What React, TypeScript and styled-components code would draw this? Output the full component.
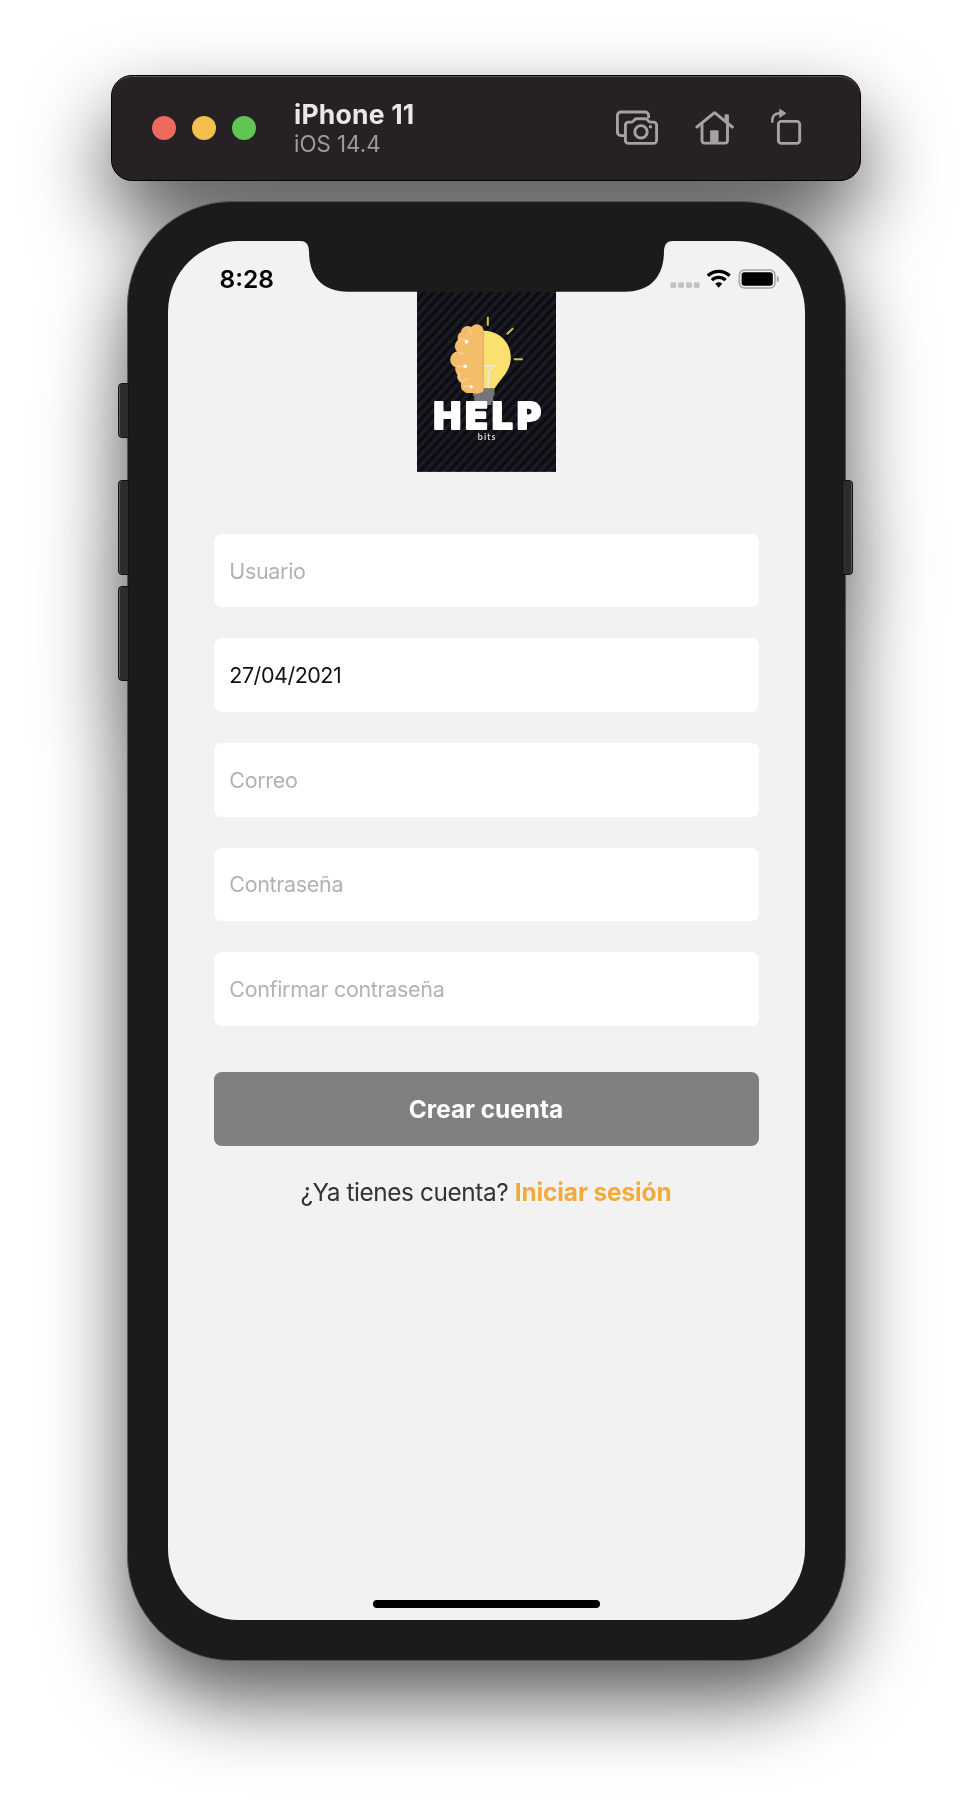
import React from "react";
import styled, { createGlobalStyle } from "styled-components";

const GlobalStyle = createGlobalStyle`
  * { box-sizing: border-box; }
  body {
    margin: 0;
    background: #fff;
    font-family: Inter, "Liberation Sans", sans-serif;
  }
`;

const Desktop = styled.main`
  width: 972px;
  height: 1810px;
  padding-top: 75px;
  overflow: hidden;
`;

const Simulator = styled.div`
  display: flex;
  flex-direction: column;
  align-items: center;
  gap: 20px;
  filter: drop-shadow(0 38px 40px rgba(0, 0, 0, 0.66));
`;

const TitleBar = styled.header`
  display: flex;
  align-items: center;
  width: 750px;
  height: 106px;
  padding: 0 58px 0 40px;
  border: 1px solid #000;
  border-radius: 21px;
  background: #252124;
  box-shadow: inset 0 1px 0 #5a5759;
`;

const Lights = styled.div`
  display: flex;
  gap: 16px;
`;

const Light = styled.span<{ $color: string }>`
  width: 24px;
  height: 24px;
  border-radius: 50%;
  background: ${(p) => p.$color};
`;

const Heading = styled.div`
  flex: 1;
  margin-left: 38px;
  padding-top: 3px;
`;

const DeviceName = styled.div`
  color: #e9e8e9;
  font-size: 26.5px;
  line-height: 29px;
  font-weight: 700;
  letter-spacing: 0.22px;
`;

const OsVersion = styled.div`
  color: #a19b9f;
  font-size: 22.3px;
  line-height: 30px;
`;

const Tools = styled.div`
  display: flex;
  align-items: center;
  gap: 36px;
  color: #a7a1a5;
`;

const Phone = styled.div`
  position: relative;
  width: 719px;
  height: 1460px;
  padding: 39px 40px 40px;
  border: 1px solid #555;
  border-radius: 105px;
  background: #1b1b1b;
`;

const SideButton = styled.span<{ $side: "left" | "right"; $top: number; $height: number }>`
  position: absolute;
  ${(p) => (p.$side === "left" ? "left: -10px" : "right: -8px")};
  top: ${(p) => p.$top}px;
  width: 11px;
  height: ${(p) => p.$height}px;
  border: 1px solid #111;
  border-radius: ${(p) => (p.$side === "left" ? "4px 0 0 4px" : "0 4px 4px 0")};
  background: #2c2c2c;
  box-shadow: inset ${(p) => (p.$side === "left" ? "1px" : "-1px")} 0 0 #5c5c5c;
`;

const Screen = styled.div`
  position: relative;
  display: flex;
  flex-direction: column;
  align-items: center;
  width: 637px;
  height: 1379px;
  border-radius: 71px;
  background: #f2f2f2;
  overflow: hidden;
`;

const Notch = styled.svg`
  position: absolute;
  top: 0;
  left: 132px;
`;

const StatusBar = styled.div`
  display: flex;
  flex: none;
  justify-content: space-between;
  align-self: stretch;
  height: 46px;
  padding: 25px 25px 0 52px;
`;

const Time = styled.span`
  font-size: 24.5px;
  line-height: 27px;
  font-weight: 600;
  color: #000;
`;

const Signals = styled.div`
  display: flex;
  align-items: center;
  height: 27px;
`;

const Logo = styled.svg`
  flex: none;
  display: block;
`;

const Form = styled.form`
  display: flex;
  flex-direction: column;
  gap: 30.8px;
  width: 545px;
  margin-top: 61.7px;
`;

const Field = styled.input`
  height: 73.85px;
  padding: 0 15.8px;
  border: 0;
  border-radius: 7.7px;
  background: #fff;
  color: #111;
  font: 400 21.5px Inter, "Liberation Sans", sans-serif;
  letter-spacing: -0.48px;
  &::placeholder {
    color: #b2b2b2;
    letter-spacing: -0.33px;
    opacity: 1;
  }
`;

const Submit = styled.button`
  height: 73.85px;
  margin-top: 15.4px;
  border: 0;
  border-radius: 7.7px;
  background: #808080;
  color: #fff;
  font: 700 24.4px Inter, "Liberation Sans", sans-serif;
  letter-spacing: 0;
`;

const Footer = styled.p`
  margin: 31px 0 0;
  color: #333;
  font-size: 24.4px;
  line-height: 30px;
  letter-spacing: -0.43px;
  white-space: nowrap;
`;

const Link = styled.a`
  color: #f2ab3a;
  font-weight: 700;
  letter-spacing: -0.08px;
`;

const HomeIndicator = styled.span`
  width: 227px;
  height: 8px;
  margin-top: auto;
  margin-bottom: 12px;
  border-radius: 4px;
  background: #000;
`;

const RotateGlyph = styled.svg`
  margin-bottom: 2px;
`;

const CameraIcon = () => (
  <svg width="42" height="36" viewBox="0 0 42 36" fill="none" stroke="currentColor" strokeWidth="2.9">
    <path d="M8 25.6H5a3.6 3.6 0 0 1-3.6-3.6V5.6A3.6 3.6 0 0 1 5 2h24a3.6 3.6 0 0 1 3.6 3.6V8" />
    <path d="M12.4 12.1h3.1c1 0 1.5-.4 2.1-1.2l.8-1.1c.5-.7 1.1-1 2-1h9.2c.9 0 1.5.3 2 1l.8 1.1c.6.8 1.1 1.2 2.1 1.2h3.1a3 3 0 0 1 3 3v15.3a3 3 0 0 1-3 3H12.4a3 3 0 0 1-3-3V15.1a3 3 0 0 1 3-3z" />
    <circle cx="25" cy="21.8" r="6.2" />
    <circle cx="34.4" cy="16.8" r="1.7" fill="currentColor" stroke="none" />
  </svg>
);

const HomeIcon = () => (
  <svg width="40" height="36" viewBox="0 0 40 36" fill="none" stroke="currentColor" strokeWidth="2.9" strokeLinecap="round" strokeLinejoin="round">
    <path d="M2.9 17 20.6 2.7 38.3 17" />
    <path d="M8 14v16.7a2.4 2.4 0 0 0 2.4 2.4h20.7a2.4 2.4 0 0 0 2.4-2.4V14" />
    <path d="M30.6 5.2a1 1 0 0 1 1-1h2.3a1 1 0 0 1 1 1V14l-4.3-3.5z" fill="currentColor" stroke="none" />
    <path d="M16.1 33V21.2a1 1 0 0 1 1-1h6.5a1 1 0 0 1 1 1V33z" fill="currentColor" stroke="none" />
  </svg>
);

const RotateIcon = () => (
  <RotateGlyph width="32" height="38" viewBox="0 0 32 38" fill="none" stroke="currentColor" strokeWidth="2.9">
    <rect x="8.4" y="13.4" width="21.3" height="22" rx="2.8" />
    <path d="M2.3 14.8V12.5C2.3 8 5 5.2 10 5.2" strokeWidth="2.5" />
    <path d="M9.6 1.2v8.2L16 5.2z" fill="currentColor" strokeWidth="0.8" strokeLinejoin="round" />
  </RotateGlyph>
);

const StatusIcons = () => (
  <svg width="110" height="21" viewBox="0 0 110 21">
    {[0, 7.8, 15.6, 23.4].map((x) => (
      <rect key={x} x={x + 0.4} y="13.2" width="5.8" height="5.8" rx="1.4" fill="#c3c3c3" />
    ))}
    <g fill="none" stroke="#000" strokeWidth="3.4">
      <path d="M37.8 6.8a15.6 15.6 0 0 1 21.8 0" />
      <path d="M41.9 11.1a9.8 9.8 0 0 1 13.6 0" />
    </g>
    <path d="M45.2 14.8a5.4 5.4 0 0 1 7 0L48.7 18.7z" fill="#000" />
    <rect x="69.4" y="1" width="35.6" height="18" rx="5" fill="none" stroke="#a3a3a3" strokeWidth="1.5" />
    <rect x="71.6" y="3.2" width="31.2" height="13.6" rx="2.8" fill="#000" />
    <path d="M106.8 7c3 1 3 5.2 0 6.2z" fill="#a3a3a3" />
  </svg>
);

const BrainBulbLogo = () => (
  <Logo width="139" height="184.9" viewBox="51.5 21 417 554.7">
    <defs>
      <pattern id="stripes" width="21" height="21" patternUnits="userSpaceOnUse" patternTransform="rotate(43)">
        <rect width="21" height="21" fill="#0d0d0e" />
        <rect width="10.5" height="21" fill="#1a1b28" />
      </pattern>
    </defs>
    <rect x="51.5" y="21" width="417" height="554.7" fill="url(#stripes)" />
    <g stroke="#d2c342" strokeWidth="6">
      <path d="M264 110v27M321 163l19-18M342 238h27" />
    </g>
    <path d="M219 325h65v22h-4v18h-5v10h-47v-10h-5v-18h-4z" fill="#767676" />
    <path d="M240 152h15C300 154 333 188 333 232C333 274 305 292 285 325h-45z" fill="#fae06f" />
    <path d="M250 258h34l-18 15v52" fill="none" stroke="#e9e8d8" strokeWidth="6" />
    <g fill="#f4bd69">
      <path d="M200 145h42q10 0 10 10v170q0 14-14 14h-40l-25-80z" />
      <circle cx="231" cy="153" r="20" />
      <circle cx="204" cy="159" r="21" />
      <circle cx="192" cy="173" r="19" />
      <circle cx="190" cy="199" r="25" />
      <circle cx="176" cy="239" r="25" />
      <circle cx="190" cy="267" r="24" />
      <circle cx="193" cy="290" r="21" />
      <circle cx="205" cy="317" r="22" />
      <circle cx="230" cy="321" r="20" />
    </g>
    <path d="M250 155v172" stroke="#d9b05e" strokeWidth="3" />
    <g fill="none" stroke="#f9dcb0" strokeWidth="3">
      <path d="M176 183q8-13 24 2M211 145q-4 16 9 18M174 216q14 10 22 0M170 259h26M180 276q-8 14 4 22M186 311q4-14 17-14M191 324q6-10 23-4" />
    </g>
    <g fill="#fff">
      <circle cx="200" cy="185" r="5.5" />
      <circle cx="196" cy="259" r="5.5" />
      <circle cx="214" cy="320" r="5" />
    </g>
    <text x="101" y="448" fill="#fff" stroke="#fff" strokeWidth="6" strokeLinejoin="round" fontFamily="Inter" fontWeight="900" fontSize="110" textLength="323" lengthAdjust="spacing">
      HELP
    </text>
    <text x="234" y="480" fill="#fff" fontFamily="Lato" fontWeight="400" fontSize="27" textLength="53" lengthAdjust="spacing">
      bits
    </text>
  </Logo>
);

const fields = [
  { placeholder: "Usuario" },
  { placeholder: "Fecha", value: "27/04/2021" },
  { placeholder: "Correo" },
  { placeholder: "Contraseña" },
  { placeholder: "Confirmar contraseña" },
];

export default function App() {
  return (
    <Desktop>
      <GlobalStyle />
      <Simulator>
        <TitleBar>
          <Lights>
            <Light $color="#ed6a5f" />
            <Light $color="#f5bf4f" />
            <Light $color="#61c554" />
          </Lights>
          <Heading>
            <DeviceName>iPhone 11</DeviceName>
            <OsVersion>iOS 14.4</OsVersion>
          </Heading>
          <Tools>
            <CameraIcon />
            <HomeIcon />
            <RotateIcon />
          </Tools>
        </TitleBar>
        <Phone>
          <SideButton $side="left" $top={181} $height={55} />
          <SideButton $side="left" $top={278} $height={95} />
          <SideButton $side="left" $top={384} $height={95} />
          <SideButton $side="right" $top={278} $height={95} />
          <Screen>
            <StatusBar>
              <Time>8:28</Time>
              <Signals>
                <StatusIcons />
              </Signals>
            </StatusBar>
            <BrainBulbLogo />
            <Form>
              {fields.map((f) => (
                <Field key={f.placeholder} placeholder={f.placeholder} defaultValue={f.value} />
              ))}
              <Submit type="button">Crear cuenta</Submit>
            </Form>
            <Footer>
              ¿Ya tienes cuenta? <Link>Iniciar sesión</Link>
            </Footer>
            <HomeIndicator />
            <Notch width="373" height="51" viewBox="0 0 373 51">
              <path d="M0 0C6 0 8.5 3 9 10C9 35 22 50.7 48 50.7H325C351 50.7 364 35 364 10C364.5 3 367 0 373 0Z" fill="#1b1b1b" />
            </Notch>
          </Screen>
        </Phone>
      </Simulator>
    </Desktop>
  );
}
